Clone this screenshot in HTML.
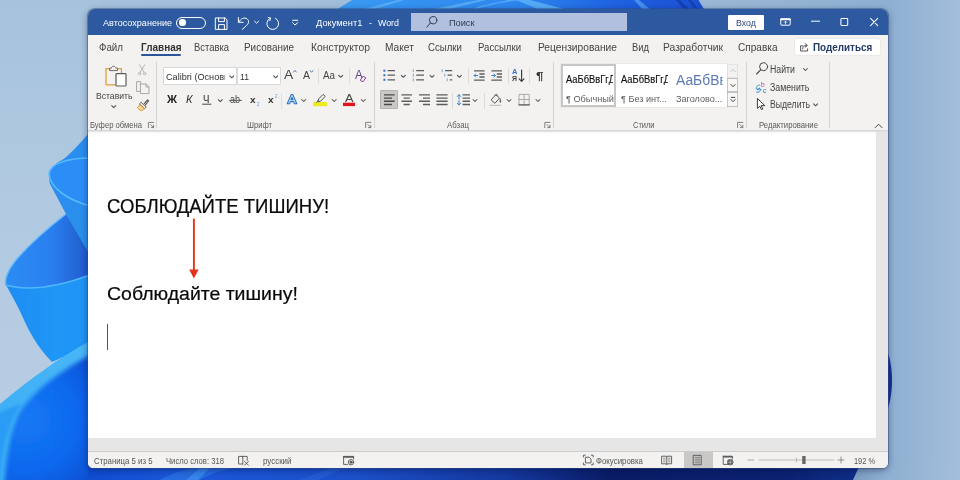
<!DOCTYPE html>
<html lang="ru">
<head>
<meta charset="utf-8">
<title>Документ1 - Word</title>
<style>
html,body{margin:0;padding:0;}
body{width:960px;height:480px;overflow:hidden;background:#a6c1db;font-family:"Liberation Sans",sans-serif;}
#stage{position:relative;width:960px;height:480px;overflow:hidden;}
#stage>svg{position:absolute;left:0;top:0;}
.abs{position:absolute;}
#win{position:absolute;left:87.8px;top:8.8px;width:800.3px;height:459.2px;border-radius:6.5px 6.5px 5.5px 5.5px;overflow:hidden;background:#f3f2f1;box-shadow:0 0 0 0.8px rgba(50,80,130,.6),0 2px 7px rgba(0,12,60,.45);}
#win div{position:absolute;}
.t{position:absolute;white-space:pre;line-height:1;transform-origin:0 0;display:block;}
</style>
</head>
<body>
<div id="stage">
<svg width="960" height="480" viewBox="0 0 960 480">
<defs>
<linearGradient id="gL" x1="0" y1="0" x2="0" y2="1"><stop offset="0" stop-color="#a6c2dc"/><stop offset="0.3" stop-color="#aec8e0"/><stop offset="0.6" stop-color="#b4cbe2"/><stop offset="1" stop-color="#bacde3"/></linearGradient>
<linearGradient id="gR" x1="0" y1="0" x2="1" y2="0"><stop offset="0" stop-color="#8eafd1"/><stop offset="1" stop-color="#a3bedb"/></linearGradient>
<linearGradient id="gT" x1="0" y1="0" x2="960" y2="0" gradientUnits="userSpaceOnUse"><stop offset="0" stop-color="#a6c2dc"/><stop offset="0.73" stop-color="#9ab8d5"/><stop offset="0.925" stop-color="#8eafd1"/><stop offset="1" stop-color="#a3bedb"/></linearGradient>
<linearGradient id="gP2" x1="0" y1="0" x2="1" y2="0"><stop offset="0" stop-color="#2b8cf3"/><stop offset="0.55" stop-color="#2a7ff0"/><stop offset="1" stop-color="#1f58c8"/></linearGradient>
<linearGradient id="gP2o" x1="0" y1="0" x2="1" y2="0"><stop offset="0" stop-color="#1e8cf3"/><stop offset="0.6" stop-color="#1f97f6"/><stop offset="1" stop-color="#1d94f5"/></linearGradient>
<linearGradient id="gB" x1="0" y1="0" x2="1" y2="0"><stop offset="0" stop-color="#0f4cd2"/><stop offset="0.1" stop-color="#1a57da"/><stop offset="0.3" stop-color="#1c50ca"/><stop offset="0.48" stop-color="#14389e"/><stop offset="0.6" stop-color="#0a1c66"/><stop offset="0.8" stop-color="#0b2272"/><stop offset="0.9" stop-color="#10308c"/><stop offset="1" stop-color="#10308c"/></linearGradient>
<linearGradient id="gTop" x1="0" y1="0" x2="1" y2="0"><stop offset="0" stop-color="#3a9af2"/><stop offset="0.5" stop-color="#2d86ee"/><stop offset="0.75" stop-color="#1f62e2"/><stop offset="1" stop-color="#1b4fd2"/></linearGradient>
<radialGradient id="gIn" cx="26" cy="420" r="100" gradientUnits="userSpaceOnUse"><stop offset="0" stop-color="#1478f4"/><stop offset="0.5" stop-color="#0f69ee"/><stop offset="0.8" stop-color="#0c55d8"/><stop offset="1" stop-color="#0a3fbe"/></radialGradient>
<linearGradient id="gBand" x1="0" y1="0" x2="1" y2="0"><stop offset="0" stop-color="#3fb0f6"/><stop offset="1" stop-color="#4ab6f6"/></linearGradient>
<linearGradient id="gBR" x1="853" y1="0" x2="960" y2="0" gradientUnits="userSpaceOnUse"><stop offset="0" stop-color="#7c9bbf"/><stop offset="0.3" stop-color="#8eafd1"/><stop offset="1" stop-color="#a3bedb"/></linearGradient>
<filter id="bl" x="-20%" y="-20%" width="140%" height="140%"><feGaussianBlur stdDeviation="2.2"/></filter><filter id="bl2" x="-50%" y="-20%" width="200%" height="140%"><feGaussianBlur stdDeviation="1.5"/></filter>
</defs>
<rect x="0" y="0" width="960" height="480" fill="url(#gT)"/>
<rect x="0" y="0" width="100" height="480" fill="url(#gL)"/>

<!-- top petals -->
<path d="M336 10 L352 0 L698.5 0 L704.5 10 Z" fill="url(#gTop)"/>
<path d="M360 10 L398 0 L404 0 L372 10Z M428 10 L478 0 L486 0 L446 10Z M470 10 L500 3 L520 0 L508 0 L480 6Z" fill="#6cbcf8" opacity=".6"/>
<path d="M516 0 L530 0 L568 10 L540 10 Z" fill="#5cb2f6" opacity=".85"/>
<path d="M634 0 L639 0 L651 10 L643 10 Z" fill="#4a9ef0" opacity=".8"/>
<path d="M676 0 L680 0 L690 10 L684 10 Z M688 0 L691 0 L699 10 L695 10Z" fill="#0f3aa8" opacity=".7"/>
<!-- left petals -->
<path d="M90 132 C78 145 70 155 62 160 C52 165 47 172 50 184 L66 214 L90 260 Z" fill="#2b8eef"/>
<path d="M90 158 C72 158 50 162 49 174 C50 188 68 200 90 206 Z" fill="#2b8df6"/>
<path d="M90 158 C72 158 50 162 49 174 C50 188 68 200 90 206" fill="none" stroke="#58bafc" stroke-width="1.6"/>
<path d="M66 214 C48 228 28 246 16 260 C8 270 4 278 6 286 C30 292 60 286 90 275 L90 255 Z" fill="url(#gP2)"/>
<path d="M66 214 C48 228 28 246 16 260 C8 270 4 278 6 286" fill="none" stroke="#62bcfb" stroke-width="1.4"/>
<path d="M66 214 L90 255 L90 220 L72 205 Z" fill="#2a8fea"/>
<path d="M6 285 C30 292 60 286 90 275 L90 345 L52 362 C42 352 32 338 24 320 C18 306 12 296 6 285Z" fill="url(#gP2o)"/>
<path d="M6 285 C30 292 60 286 90 275" fill="none" stroke="#4fb6fb" stroke-width="1.5"/>
<path d="M90 341 C60 357 30 379 0 404 L0 480 L90 480 Z" fill="url(#gBand)"/>
<path d="M100 350 C64 368 38 388 24 406 C12 422 6 452 4 490 L100 490 Z" fill="url(#gIn)" filter="url(#bl)"/>
<path d="M-4 414 C6 409 14 406 22 404 C8 422 2 450 0 484 L-4 484 Z" fill="#2b9cf5" filter="url(#bl2)"/>
<!-- bottom strip -->
<rect x="88" y="462" width="872" height="18" fill="url(#gB)"/>
<path d="M160 480 C170 474 182 470 196 468 L236 468 C222 470 210 474 200 480 Z" fill="#2b72e2" opacity=".75"/>
<path d="M186 480 L200 468 L210 468 L198 480Z" fill="#3b8cee" opacity=".8"/>
<path d="M300 480 L330 468 L345 468 L318 480Z" fill="#2a63d6" opacity=".6"/>
<path d="M853 480 L862 460 L960 460 L960 480 Z" fill="url(#gBR)"/>
<!-- right sliver -->
<path d="M886 348 C894 365 894 396 886 413 Z" fill="#17339a"/>
</svg>
<div id="win"><div id="in" style="left:-87.8px;top:-8.8px;width:960px;height:480px;">
<!-- title bar -->
<div style="left:87px;top:8px;width:803px;height:26.8px;background:#2c59a0;"></div>
<div style="left:410.5px;top:13px;width:216.5px;height:18px;background:#b0c0de;"></div>
<div style="left:728px;top:15px;width:36px;height:14.5px;background:#fdfdfd;border-radius:1px;"></div>
<!-- toggle -->
<div style="left:176px;top:16.5px;width:28px;height:10px;border:1px solid #fff;border-radius:6px;"></div>
<div style="left:179.2px;top:19.2px;width:6.6px;height:6.6px;border-radius:50%;background:#fff;"></div>
<!-- tab row -->
<div style="left:140.5px;top:54.4px;width:40.5px;height:1.7px;background:#2b579a;border-radius:1px;"></div>
<div style="left:794.5px;top:38.7px;width:85px;height:16.4px;background:#fff;border-radius:2px;box-shadow:0 0 0 .5px #e4e2e0;"></div>
<!-- ribbon separators -->
<div style="left:156.2px;top:61.5px;width:1px;height:66px;background:#d6d4d2;"></div>
<div style="left:374px;top:61.5px;width:1px;height:66px;background:#d6d4d2;"></div>
<div style="left:553.2px;top:61.5px;width:1px;height:66px;background:#d6d4d2;"></div>
<div style="left:746px;top:61.5px;width:1px;height:66px;background:#d6d4d2;"></div>
<div style="left:829.3px;top:61.5px;width:1px;height:66px;background:#d6d4d2;"></div>
<!-- small separators -->
<div style="left:318px;top:68px;width:1px;height:16px;background:#dedcda;"></div>
<div style="left:349px;top:68px;width:1px;height:16px;background:#dedcda;"></div>
<div style="left:281px;top:93px;width:1px;height:16px;background:#e2e0de;"></div>
<div style="left:468px;top:68px;width:1px;height:16px;background:#dedcda;"></div>
<div style="left:508px;top:68px;width:1px;height:16px;background:#dedcda;"></div>
<div style="left:528.5px;top:68px;width:1px;height:16px;background:#dedcda;"></div>
<div style="left:452px;top:93px;width:1px;height:16px;background:#dedcda;"></div>
<div style="left:484.3px;top:93px;width:1px;height:16px;background:#dedcda;"></div>
<!-- font boxes -->
<div style="left:163.7px;top:67.5px;width:72px;height:16.5px;background:#fff;box-shadow:0 0 0 .6px #c9c7c5;"></div>
<div style="left:237.5px;top:67.5px;width:42.5px;height:16.5px;background:#fff;box-shadow:0 0 0 .6px #c9c7c5;"></div>
<!-- align-left selected -->
<div style="left:381.2px;top:91.3px;width:16.2px;height:17.2px;background:#c9c8c7;box-shadow:0 0 0 .7px #9a9998;"></div>
<!-- styles gallery -->
<div style="left:560.6px;top:63.8px;width:166.6px;height:43.2px;background:#fff;box-shadow:0 0 0 .5px #e1dfdd;"></div>
<div style="left:561px;top:64.2px;width:51px;height:38.6px;border:2px solid #c8c6c4;"></div>
<div style="left:727.2px;top:63.8px;width:11px;height:14px;background:#f3f2f1;box-shadow:inset 0 0 0 .6px #d8d6d4;"></div>
<div style="left:727.2px;top:78px;width:11px;height:14px;background:#f7f6f5;box-shadow:inset 0 0 0 .7px #b5b3b1;"></div>
<div style="left:727.2px;top:92.2px;width:11px;height:14.8px;background:#f7f6f5;box-shadow:inset 0 0 0 .7px #b5b3b1;"></div>
<!-- ribbon bottom line -->
<div style="left:87px;top:130.2px;width:803px;height:1px;background:#d9d7d5;"></div>
<!-- doc area -->
<div style="left:87px;top:131px;width:803px;height:321px;background:#e6e6e6;"></div>
<div style="left:87px;top:131px;width:788.8px;height:307px;background:#fff;"></div>
<div style="left:87px;top:131px;width:803px;height:2px;background:linear-gradient(#dcdcdc,rgba(255,255,255,0));"></div>
<!-- status bar -->
<div style="left:87px;top:451px;width:803px;height:.8px;background:#cfcdcb;"></div>
<div style="left:87px;top:451.8px;width:803px;height:18px;background:#f3f2f1;"></div>
<div style="left:684px;top:452px;width:28.5px;height:16px;background:#c9c8c7;"></div>
<!-- cursor -->
<div style="left:106.6px;top:324px;width:1px;height:26px;background:#555;"></div>
</div></div>
<div id="ov" class="abs" style="left:0;top:0;width:960px;height:480px;will-change:transform;">

<div id="txt">
<span class="t" style="left:102.60px;top:18.00px;font-size:9.5px;color:#ffffff;transform:scaleX(0.9528);">Автосохранение</span>
<span class="t" style="left:316.00px;top:18.00px;font-size:9.5px;color:#ffffff;transform:scaleX(0.9760);">Документ1</span>
<span class="t" style="left:369.40px;top:18.00px;font-size:9.5px;color:#ffffff;transform:scaleX(0.9458);">-</span>
<span class="t" style="left:377.60px;top:18.00px;font-size:9.5px;color:#ffffff;transform:scaleX(0.9320);">Word</span>
<span class="t" style="left:449.00px;top:18.00px;font-size:9.5px;color:#2f3a4f;transform:scaleX(0.9685);">Поиск</span>
<span class="t" style="left:736.00px;top:18.00px;font-size:9.5px;color:#2f4a7d;transform:scaleX(0.9302);">Вход</span>
<span class="t" style="left:99.00px;top:43.00px;font-size:10.4px;color:#444;transform:scaleX(0.9394);">Файл</span>
<span class="t" style="left:140.50px;top:43.00px;font-size:10.4px;color:#333;font-weight:700;transform:scaleX(0.9582);">Главная</span>
<span class="t" style="left:193.80px;top:43.00px;font-size:10.4px;color:#444;transform:scaleX(0.9061);">Вставка</span>
<span class="t" style="left:244.00px;top:43.00px;font-size:10.4px;color:#444;transform:scaleX(0.9552);">Рисование</span>
<span class="t" style="left:310.50px;top:43.00px;font-size:10.4px;color:#444;transform:scaleX(0.9958);">Конструктор</span>
<span class="t" style="left:385.00px;top:43.00px;font-size:10.4px;color:#444;transform:scaleX(0.9794);">Макет</span>
<span class="t" style="left:428.00px;top:43.00px;font-size:10.4px;color:#444;transform:scaleX(0.9291);">Ссылки</span>
<span class="t" style="left:478.00px;top:43.00px;font-size:10.4px;color:#444;transform:scaleX(0.9219);">Рассылки</span>
<span class="t" style="left:538.00px;top:43.00px;font-size:10.4px;color:#444;transform:scaleX(0.9846);">Рецензирование</span>
<span class="t" style="left:632.00px;top:43.00px;font-size:10.4px;color:#444;transform:scaleX(0.9037);">Вид</span>
<span class="t" style="left:663.00px;top:43.00px;font-size:10.4px;color:#444;transform:scaleX(0.9902);">Разработчик</span>
<span class="t" style="left:737.50px;top:43.00px;font-size:10.4px;color:#444;transform:scaleX(0.9690);">Справка</span>
<span class="t" style="left:813.00px;top:43.00px;font-size:10.4px;color:#24396a;font-weight:700;transform:scaleX(0.9509);">Поделиться</span>
<span class="t" style="left:95.60px;top:91.00px;font-size:9.6px;color:#444;transform:scaleX(0.8950);">Вставить</span>
<span class="t" style="left:165.50px;top:72.00px;font-size:9.6px;color:#333;transform:scaleX(0.9511);width:62.45px;overflow:hidden;">Calibri (Основн</span>
<span class="t" style="left:239.80px;top:72.00px;font-size:9.9px;color:#333;transform:scaleX(0.8780);">11</span>
<span class="t" style="left:90.00px;top:121.00px;font-size:8.6px;color:#5a5a5a;transform:scaleX(0.8903);">Буфер обмена</span>
<span class="t" style="left:247.00px;top:121.00px;font-size:8.6px;color:#5a5a5a;transform:scaleX(0.8840);">Шрифт</span>
<span class="t" style="left:446.50px;top:121.00px;font-size:8.6px;color:#5a5a5a;transform:scaleX(0.9125);">Абзац</span>
<span class="t" style="left:632.50px;top:121.00px;font-size:8.6px;color:#5a5a5a;transform:scaleX(0.8681);">Стили</span>
<span class="t" style="left:758.50px;top:121.00px;font-size:8.6px;color:#5a5a5a;transform:scaleX(0.9012);">Редактирование</span>
<span class="t" style="left:166.50px;top:95.00px;font-size:10.4px;color:#222;font-weight:700;transform:scaleX(1.0631);">Ж</span>
<span class="t" style="left:186.00px;top:95.00px;font-size:10.4px;color:#333;font-style:italic;transform:scaleX(1.0612);">К</span>
<span class="t" style="left:203.40px;top:94.00px;font-size:10.6px;color:#2b2b2b;transform:scaleX(0.9062);">Ч</span>
<span class="t" style="left:230.30px;top:94.00px;font-size:10.8px;color:#4a4a4a;transform:scaleX(0.8322);">ab</span>
<span class="t" style="left:250.40px;top:95.00px;font-size:9.8px;color:#333;font-weight:700;transform:scaleX(1.0269);">x</span>
<span class="t" style="left:257.00px;top:102.00px;font-size:5px;color:#5b9bd5;transform:scaleX(0.8629);">2</span>
<span class="t" style="left:268.40px;top:95.00px;font-size:9.8px;color:#333;font-weight:700;transform:scaleX(1.0269);">x</span>
<span class="t" style="left:274.80px;top:94.00px;font-size:5px;color:#5b9bd5;transform:scaleX(0.8629);">2</span>
<span class="t" style="left:284.40px;top:68.00px;font-size:13.5px;color:#444;transform:scaleX(1.0205);">A</span>
<span class="t" style="left:303.00px;top:70.00px;font-size:10.8px;color:#444;transform:scaleX(0.9718);">A</span>
<span class="t" style="left:323.00px;top:71.00px;font-size:10px;color:#444;transform:scaleX(0.9808);">Aa</span>
<span class="t" style="left:354.60px;top:68.00px;font-size:13px;color:#5d4a80;transform:scaleX(0.8995);">A</span>
<span class="t" style="left:345.00px;top:93.00px;font-size:10.8px;color:#444;transform:scaleX(1.1800);">A</span>
<span class="t" style="left:512.00px;top:68.00px;font-size:7.4px;color:#2e75c8;font-weight:700;transform:scaleX(1.0105);">A</span>
<span class="t" style="left:512.20px;top:75.00px;font-size:7px;color:#444;font-weight:700;transform:scaleX(0.9938);">Я</span>
<span class="t" style="left:535.50px;top:71.00px;font-size:10.6px;color:#333;font-weight:700;transform:scaleX(1.2698);">¶</span>
<span class="t" style="left:566.00px;top:75.00px;font-size:10.2px;color:#111;-webkit-text-stroke:.15px #111;transform:scaleX(0.9193);width:51.45px;overflow:hidden;">АаБбВвГгДд</span>
<span class="t" style="left:621.00px;top:75.00px;font-size:10.2px;color:#111;-webkit-text-stroke:.15px #111;transform:scaleX(0.9193);width:51.45px;overflow:hidden;">АаБбВвГгДд</span>
<span class="t" style="left:676.00px;top:72.00px;font-size:15.5px;color:#5a7ab2;transform:scaleX(0.8949);width:52.30px;overflow:hidden;">АаБбВв</span>
<span class="t" style="left:565.60px;top:95.00px;font-size:9.3px;color:#5e5e5e;transform:scaleX(0.9862);">¶ Обычный</span>
<span class="t" style="left:620.80px;top:95.00px;font-size:9.3px;color:#5e5e5e;transform:scaleX(0.9787);">¶ Без инт...</span>
<span class="t" style="left:676.00px;top:95.00px;font-size:9.3px;color:#5e5e5e;transform:scaleX(0.9788);">Заголово...</span>
<span class="t" style="left:770.20px;top:65.00px;font-size:10px;color:#444;transform:scaleX(0.8758);">Найти</span>
<span class="t" style="left:770.20px;top:83.00px;font-size:10px;color:#444;transform:scaleX(0.8768);">Заменить</span>
<span class="t" style="left:770.20px;top:100.00px;font-size:10px;color:#444;transform:scaleX(0.8669);">Выделить</span>
<span class="t" style="left:760.60px;top:81.00px;font-size:8px;color:#c0398f;transform:scaleX(0.8084);">b</span>
<span class="t" style="left:763.20px;top:87.00px;font-size:8px;color:#2e75c8;transform:scaleX(0.8500);">c</span>
<span class="t" style="left:106.50px;top:197.00px;font-size:19.4px;color:#0a0a0a;-webkit-text-stroke:.22px #0a0a0a;transform:scaleX(0.9564);">СОБЛЮДАЙТЕ ТИШИНУ!</span>
<span class="t" style="left:106.50px;top:285.00px;font-size:18.8px;color:#0a0a0a;-webkit-text-stroke:.22px #0a0a0a;transform:scaleX(1.0367);">Соблюдайте тишину!</span>
<span class="t" style="left:93.80px;top:457.00px;font-size:8.5px;color:#555;transform:scaleX(0.9181);">Страница 5 из 5</span>
<span class="t" style="left:166.00px;top:457.00px;font-size:8.5px;color:#555;transform:scaleX(0.9025);">Число слов: 318</span>
<span class="t" style="left:262.50px;top:457.00px;font-size:8.5px;color:#555;transform:scaleX(0.9339);">русский</span>
<span class="t" style="left:596.20px;top:457.00px;font-size:8.5px;color:#555;transform:scaleX(0.9239);">Фокусировка</span>
<span class="t" style="left:854.00px;top:457.00px;font-size:8.5px;color:#555;transform:scaleX(0.8710);">192 %</span>
</div>
<svg width="960" height="480" viewBox="0 0 960 480" style="position:absolute;left:0;top:0" fill="none" stroke-linecap="round" stroke-linejoin="round">
<!-- TITLE BAR -->
<g stroke="#fff" stroke-width="1">
<path d="M215.7 18 H225.2 L227 19.8 V29.4 H215.7 Z"/>
<path d="M218.6 18 V21.6 H224.4 V18"/>
<path d="M218.6 29.4 V24.6 H224.4 V29.4"/>
<path d="M238.4 17.6 V22.3 H243.2"/>
<path d="M238.6 22 C241 18.5 244.5 17 247 18.8 C249.5 20.8 248.8 23.5 246.5 25.5 L242.3 29.4"/>
<path d="M254.6 21.2 L256.6 23.2 L258.6 21.2"/>
<path d="M270.2 18.2 A5.9 5.9 0 1 0 275.5 18.3"/>
<path d="M268.2 17.4 L270.6 18.2 L269.8 20.7"/>
<path d="M292.6 20.3 H297.6" stroke-width="1.1"/>
<path d="M292.6 22.6 L295.1 25.1 L297.6 22.6"/>
<!-- window controls -->
<rect x="780.8" y="18.8" width="9.4" height="6.4" rx=".6"/>
<path d="M780.8 19.4 H790.2" stroke-width="1.6"/>
<path d="M785.5 24 V21.4 M784.2 22.5 L785.5 21.2 L786.8 22.5" stroke-width=".8"/>
<path d="M811.4 21.2 H819.6"/>
<rect x="840.9" y="18.5" width="6.8" height="6.9" rx=".9" stroke-width="1.05"/>
<path d="M870.6 18.3 L877.7 25.7 M877.7 18.3 L870.6 25.7" stroke-width="1.05"/>
</g>
<g stroke="#2f3a4f" stroke-width="1">
<circle cx="433.1" cy="20.2" r="3.7"/>
<path d="M430.4 23 L426.8 27.2"/>
</g>

<!-- CLIPBOARD GROUP -->
<path d="M109.6 68.6 H106 V84.8 H115.2" stroke="#d9a441" stroke-width="1.3"/>
<path d="M117.6 68.6 H121.4 V72.6" stroke="#d9a441" stroke-width="1.3"/>
<path d="M109.6 70.2 V68.2 H111.4 C111.6 65.6 115.6 65.6 115.8 68.2 H117.6 V70.2 Z" stroke="#6a6a6a" stroke-width="1" fill="#f3f2f1"/>
<rect x="116" y="73.7" width="10" height="12.3" rx=".8" stroke="#5c5c5c" stroke-width="1.2" fill="#fff"/>
<path d="M111.7 105.6 L113.7 107.6 L115.7 105.6" stroke="#505050" stroke-width="1.05"/>
<g stroke="#b4b2b0" stroke-width="1">
<path d="M139.4 64.8 L144.2 72.4 M144.8 64.8 L140 72.4"/>
<circle cx="139.6" cy="73.6" r="1.2"/><circle cx="144.6" cy="73.6" r="1.2"/>
</g>
<g stroke="#a9a7a5" stroke-width="1">
<path d="M140.6 84 V81.6 H136.6 V91.4 H140.6"/>
<path d="M140.8 84 H146.2 L149 86.8 V93.6 H140.8 Z"/>
<path d="M146 84.2 V87 H148.8"/>
</g>
<path d="M144.2 103.6 L147.6 100 L148.6 101 L145.4 104.8" stroke="#555" stroke-width="1.1"/>
<path d="M141.4 102.6 L146.2 107.2 L144.6 108.6 L139.8 104.2 Z" stroke="#555" stroke-width=".9" fill="#f3f2f1"/>
<path d="M139.6 104.4 L144.4 108.8 C143 110.2 141.4 110.6 140 110.2 L137.4 107.6 C138.4 107 139.2 105.8 139.6 104.4 Z" stroke="#e09a2a" stroke-width="1" fill="#f7d9a0"/>

<!-- FONT GROUP -->
<path d="M229.7 75.8 L231.7 77.8 L233.7 75.8" stroke="#505050" stroke-width="1.05"/><path d="M273.7 75.8 L275.7 77.8 L277.7 75.8" stroke="#505050" stroke-width="1.05"/><path d="M218.3 99.7 L220.3 101.7 L222.3 99.7" stroke="#505050" stroke-width="1.05"/><path d="M338.7 75.3 L340.7 77.3 L342.7 75.3" stroke="#505050" stroke-width="1.05"/><path d="M301.7 99.5 L303.7 101.5 L305.7 99.5" stroke="#505050" stroke-width="1.05"/><path d="M332.2 99.5 L334.2 101.5 L336.2 99.5" stroke="#505050" stroke-width="1.05"/><path d="M361.2 99.5 L363.2 101.5 L365.2 99.5" stroke="#505050" stroke-width="1.05"/><path d="M293.6 72 L294.9 70.4 L296.2 72" stroke="#4f6f9f" stroke-width=".9"/><path d="M310.2 70.6 L311.6 72.3 L313 70.6" stroke="#4f6f9f" stroke-width=".9"/><path d="M202.6 104.2 H211" stroke="#444" stroke-width="1"/><path d="M229.4 100.4 H241.6" stroke="#555" stroke-width=".9"/><path d="M363.4 76.4 L365.8 77.8 L363 81.8 L360.6 80.4 Z" stroke="#8a3fa8" stroke-width="1" fill="#f3f2f1"/><path d="M287.2 103.8 L291.2 94.6 H292.8 L296.8 103.8 H294.4 L293.6 101.6 H290.4 L289.6 103.8 Z M291 99.8 H293 L292 97.2 Z" stroke="#2e75c8" stroke-width="1.1" fill="#cfe3f7" fill-rule="evenodd"/><path d="M313.2 102 H327.2 V106.2 H313.2 Z" fill="#ecec1c" stroke="none"/><path d="M318 101.6 L318.8 98.8 L323 94.4 L325.2 96.4 L321 100.8 Z" stroke="#555" stroke-width="1" fill="#f3f2f1"/><path d="M316.8 102.2 L318.4 100" stroke="#555" stroke-width="1"/><rect x="343" y="102.7" width="12" height="3.4" fill="#e0141e" stroke="none"/>

<!-- PARAGRAPH GROUP -->
<rect x="383.4" y="69.7" width="2" height="2" fill="#2e75c8" stroke="none"/><rect x="383.4" y="74.2" width="2" height="2" fill="#2e75c8" stroke="none"/><rect x="383.4" y="78.8" width="2" height="2" fill="#2e75c8" stroke="none"/><path d="M387.6 70.7 H395 M387.6 75.2 H395 M387.6 79.8 H395 " stroke="#5c5c5c" stroke-width="1.3" stroke-linecap="butt"/><path d="M401.3 75.3 L403.3 77.3 L405.3 75.3" stroke="#505050" stroke-width="1.05"/><path d="M413.3 69.6 V71.8" stroke="#5b93d4" stroke-width=".8"/><path d="M413.3 74.1 V76.3" stroke="#5b93d4" stroke-width=".8"/><path d="M413.3 78.7 V80.9" stroke="#5b93d4" stroke-width=".8"/><path d="M416.2 70.7 H424 M416.2 75.2 H424 M416.2 79.8 H424 " stroke="#5c5c5c" stroke-width="1.3" stroke-linecap="butt"/><path d="M430.0 75.3 L432.0 77.3 L434.0 75.3" stroke="#505050" stroke-width="1.05"/><path d="M442.2 69.6 V71.8 M444.8 74.1 V76.3 M447.2 78.7 V80.9" stroke="#5b93d4" stroke-width=".8"/><path d="M445 70.7 H452.2 M447.6 75.2 H452.2 M449.8 79.8 H452.2" stroke="#5c5c5c" stroke-width="1.3" stroke-linecap="butt"/><path d="M457.4 75.3 L459.4 77.3 L461.4 75.3" stroke="#505050" stroke-width="1.05"/><path d="M474 70.8 H484.6 M479.4 74 H484.6 M479.4 77 H484.6 M474 80.2 H484.6" stroke="#5c5c5c" stroke-width="1.3" stroke-linecap="butt"/><path d="M477.8 75.5 H474.3 M475.6 74 L474.2 75.5 L475.6 77" stroke="#2e75c8" stroke-width=".9"/><path d="M491.4 70.8 H502 M496.8 74 H502 M496.8 77 H502 M491.4 80.2 H502" stroke="#5c5c5c" stroke-width="1.3" stroke-linecap="butt"/><path d="M491.6 75.5 H495.2 M493.8 74 L495.3 75.5 L493.8 77" stroke="#2e75c8" stroke-width=".9"/><path d="M521.6 70 V81.2 M519.2 78.9 L521.6 81.4 L524 78.9" stroke="#3a3a3a" stroke-width="1.15"/><path d="M384 94.9 H394.6 M384 98.1 H392 M384 101.3 H394.6 M384 104.5 H392 " stroke="#4a4a4a" stroke-width="1.4" stroke-linecap="butt"/><path d="M401.4 94.9 H412 M403.6 98.1 H409.8 M401.4 101.3 H412 M403.6 104.5 H409.8 " stroke="#5c5c5c" stroke-width="1.4" stroke-linecap="butt"/><path d="M419 94.9 H430 M423 98.1 H430 M419 101.3 H430 M423 104.5 H430 " stroke="#5c5c5c" stroke-width="1.4" stroke-linecap="butt"/><path d="M436.4 94.9 H447.6 M436.4 98.1 H447.6 M436.4 101.3 H447.6 M436.4 104.5 H447.6 " stroke="#5c5c5c" stroke-width="1.4" stroke-linecap="butt"/><path d="M462.6 94.9 H470 M462.6 98.1 H470 M462.6 101.3 H470 M462.6 104.5 H470" stroke="#5c5c5c" stroke-width="1.4" stroke-linecap="butt"/><path d="M459 94.8 V99 M457.3 96.4 L459 94.7 L460.7 96.4 M459 100.6 V104.8 M457.3 103.2 L459 104.9 L460.7 103.2" stroke="#2e75c8" stroke-width=".9"/><path d="M473.0 99.5 L475.0 101.5 L477.0 99.5" stroke="#505050" stroke-width="1.05"/><path d="M491.4 99.6 L495.8 94.6 L499.6 98 L495.2 103 Z" stroke="#555" stroke-width="1" fill="#f3f2f1"/><path d="M495 95.6 C495.6 93.6 497.4 93.6 497.2 95.8" stroke="#555" stroke-width=".8"/><path d="M500.4 99 C500.6 100.6 501.2 101.4 500.6 102.4 C499.8 102.8 499.4 101.4 500.4 99Z" fill="#555" stroke="#555" stroke-width=".5"/><path d="M489.4 105.4 H501.2" stroke="#c8c6c4" stroke-width="1.2" stroke-linecap="butt"/><path d="M507.0 99.5 L509.0 101.5 L511.0 99.5" stroke="#505050" stroke-width="1.05"/><path d="M519 104.6 V94.4 H529.2 V104.6 M524.1 94.4 V104.6 M519 99.5 H529.2" stroke="#a3a1a0" stroke-width=".9"/><path d="M518.5 104.9 H529.7" stroke="#555" stroke-width="1.3" stroke-linecap="butt"/><path d="M536.0 99.5 L538.0 101.5 L540.0 99.5" stroke="#505050" stroke-width="1.05"/>

<!-- STYLES / EDITING -->
<path d="M730.8 71.6 L733 69.4 L735.2 71.6" stroke="#c2c0be" stroke-width="1"/><path d="M730.9 84.5 L733.0 86.7 L735.1 84.5" stroke="#444" stroke-width="1"/><path d="M730.9 97.4 H735.1" stroke="#444" stroke-width="1" stroke-linecap="butt"/><path d="M730.9 99.5 L733.0 101.7 L735.1 99.5" stroke="#444" stroke-width="1"/><circle cx="763.6" cy="66.7" r="4" stroke="#444" stroke-width="1"/><path d="M760.6 69.8 L756.6 74" stroke="#444" stroke-width="1.1"/><path d="M803.4 68.5 L805.4 70.5 L807.4 68.5" stroke="#505050" stroke-width="1.05"/><path d="M813.6 103.8 L815.6 105.8 L817.6 103.8" stroke="#505050" stroke-width="1.05"/><path d="M759.8 85 C756.6 84.6 755.4 88 757.6 89.6 M756 88.4 L757.8 89.8 L759 88" stroke="#2e9ac8" stroke-width=".9"/><path d="M756.6 92.2 C759.6 93 761.4 90.4 759.8 88.6 M761.2 90 L759.6 88.4 L758.2 90" stroke="#2e75c8" stroke-width=".9"/><path d="M757.4 98.8 V108.4 L759.8 106.2 L761.4 109.6 L762.8 109 L761.2 105.6 H764.4 Z" stroke="#333" stroke-width=".95" fill="#fff"/><path d="M148.4 127.6 V122.4 H153.6" stroke="#666" stroke-width=".8"/><path d="M150.6 124.6 L153.4 127.4 M153.6 125.2 V127.6 H151.20000000000002" stroke="#666" stroke-width=".8"/><path d="M365.6 127.6 V122.4 H370.8" stroke="#666" stroke-width=".8"/><path d="M367.8 124.6 L370.6 127.4 M370.8 125.2 V127.6 H368.40000000000003" stroke="#666" stroke-width=".8"/><path d="M544.8 127.6 V122.4 H550.0" stroke="#666" stroke-width=".8"/><path d="M547.0 124.6 L549.8 127.4 M550.0 125.2 V127.6 H547.5999999999999" stroke="#666" stroke-width=".8"/><path d="M737.6 127.6 V122.4 H742.8000000000001" stroke="#666" stroke-width=".8"/><path d="M739.8000000000001 124.6 L742.6 127.4 M742.8000000000001 125.2 V127.6 H740.4" stroke="#666" stroke-width=".8"/><path d="M875.2 127.6 L878.6 124.2 L882 127.6" stroke="#484848" stroke-width="1"/><path d="M803 45.8 H800.6 V51 H807.6 V48.8" stroke="#444" stroke-width=".9"/><path d="M802.6 49 C802.8 46.6 804.2 45.4 806.4 45.4 M805.2 43.6 L807.4 45.4 L805.2 47.2" stroke="#444" stroke-width=".9"/>

<!-- STATUS BAR -->
<g stroke="#555" stroke-width=".9"><path d="M242.8 456.4 H238.6 V464 H242.8 M242.8 456.4 V464 M242.8 456.4 H247.2 V460.4"/><path d="M244.6 461.4 L248.4 465.2 M248.4 461.4 L244.6 465.2"/><path d="M343.6 456.4 H353.6 V459 M343.6 456.4 V464.4 H347.4"/><path d="M343.6 457 H353.6" stroke-width="1.5" stroke-linecap="butt"/><circle cx="351" cy="462.2" r="2.7"/><circle cx="351" cy="462.2" r="1.1" fill="#555"/><path d="M583.4 457 V455.2 H585.2 M591.4 455.2 H593.2 V457 M593.2 463 V464.8 H591.4 M585.2 464.8 H583.4 V463"/><path d="M585.8 457.2 H589.2 L591 459 V462.9 H585.8 Z"/><path d="M662 456.2 H666.2 L666.8 457 L667.4 456.2 H671.6 V463.8 H667.4 L666.8 464.6 L666.2 463.8 H662 Z M666.8 457 V464.4"/><path d="M663.4 458.2 H665.2 M663.4 460 H665.2 M663.4 461.8 H665.2 M668.4 458.2 H670.2 M668.4 460 H670.2 M668.4 461.8 H670.2" stroke-width=".6"/><rect x="693.6" y="455.4" width="7.6" height="9.4"/><path d="M695.2 457.4 H699.6 M695.2 459.2 H699.6 M695.2 461 H699.6 M695.2 462.8 H699.6" stroke-width=".6"/><path d="M723.2 456.2 H732.4 V459 M723.2 456.2 V464.4 H727.6"/><path d="M723.2 456.8 H732.4" stroke-width="1.4" stroke-linecap="butt"/><circle cx="730.2" cy="462.2" r="2.8" fill="#555"/><path d="M727.6 462.2 H732.8 M730.2 459.6 V464.8" stroke="#f3f2f1" stroke-width=".5"/><path d="M747.8 460 H753.6" stroke="#9a9896" stroke-width=".8"/><path d="M838 460 H844 M841 457 V463" stroke="#7a7876" stroke-width=".8"/><path d="M759 460 H834" stroke="#b0aeac" stroke-width=".8"/><path d="M796.5 458 V462" stroke="#b0aeac" stroke-width=".8"/><rect x="802.2" y="456" width="3.4" height="8" fill="#666" stroke="none"/></g>
<path d="M193.9 218.6 V271" stroke="#e6321a" stroke-width="1.9" stroke-linecap="butt"/><path d="M189.2 269.4 H198.6 L193.9 278.4 Z" fill="#e6321a" stroke="none"/>
</svg>

</div>
</div>
</body>
</html>
